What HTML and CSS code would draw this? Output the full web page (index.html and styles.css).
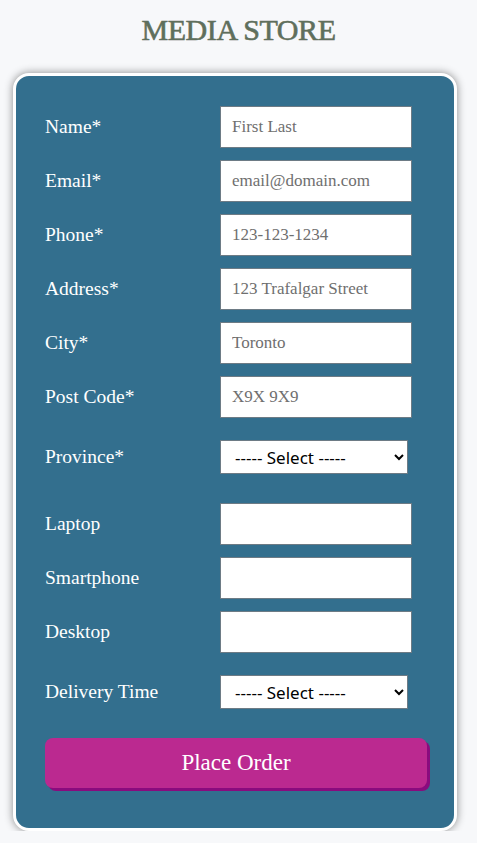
FILE: index.html
```html
<!DOCTYPE html>
<html>
<head>
<meta charset="utf-8">
<link rel="stylesheet" href="styles.css">
</head>
<body>
<h1 class="title">MEDIA STORE</h1>
<form class="card">
  <div class="row"><label class="lbl">Name*</label><input class="field" type="text" placeholder="First Last"></div>
  <div class="row"><label class="lbl">Email*</label><input class="field" type="text" placeholder="email@domain.com"></div>
  <div class="row"><label class="lbl">Phone*</label><input class="field" type="text" placeholder="123-123-1234"></div>
  <div class="row"><label class="lbl">Address*</label><input class="field" type="text" placeholder="123 Trafalgar Street"></div>
  <div class="row"><label class="lbl">City*</label><input class="field" type="text" placeholder="Toronto"></div>
  <div class="row"><label class="lbl">Post Code*</label><input class="field" type="text" placeholder="X9X 9X9"></div>
  <div class="row row-select"><label class="lbl">Province*</label><select class="pick"><option>----- Select -----</option></select></div>
  <div class="row"><label class="lbl">Laptop</label><input class="field" type="text"></div>
  <div class="row"><label class="lbl">Smartphone</label><input class="field" type="text"></div>
  <div class="row"><label class="lbl">Desktop</label><input class="field" type="text"></div>
  <div class="row row-select"><label class="lbl">Delivery Time</label><select class="pick"><option>----- Select -----</option></select></div>
  <button class="order" type="button">Place Order</button>
</form>
</body>
</html>
```
FILE: styles.css
```css
html, body {
  margin: 0;
  padding: 0;
  background: #f7f8fa;
}
body {
  font-family: "Liberation Serif", "DejaVu Serif", serif;
}
.title {
  margin: 0;
  padding-top: 13px;
  height: 73px;
  box-sizing: border-box;
  text-align: center;
  font-size: 30px;
  letter-spacing: -0.4px;
  font-weight: normal;
  -webkit-text-stroke: 0.6px #5f6f5c;
  color: #5f6f5c;
}
.card {
  box-sizing: border-box;
  width: 444px;
  margin: 0 0 0 13px;
  border: 3px solid #ffffff;
  border-radius: 16px;
  background: #336f8e;
  box-shadow: 0 0 9px rgba(0, 0, 0, 0.45);
  padding: 30px 0 40px 29px;
  display: flex;
  flex-direction: column;
  gap: 12px;
}
.row {
  display: flex;
  align-items: center;
  height: 42px;
}
.row-select {
  height: 34px;
  padding: 10px 0 17px;
}
.lbl {
  width: 175px;
  color: #ffffff;
  font-size: 19.5px;
}
.field {
  box-sizing: border-box;
  width: 192px;
  height: 42px;
  border: 1px solid #6d7b85;
  background: #ffffff;
  padding: 0 11px;
  font-family: "Liberation Serif", "DejaVu Serif", serif;
  font-size: 17px;
  color: #333;
  outline: none;
}
.field::placeholder {
  color: #6f6f6f;
}
.pick {
  box-sizing: border-box;
  width: 188px;
  height: 34px;
  border: 1px solid #6d7b85;
  border-radius: 0;
  background: #ffffff;
  padding: 0 10px;
  font-family: "Noto Sans", "Open Sans", sans-serif;
  font-size: 17px;
  color: #000;
}
.order {
  width: 382px;
  height: 50px;
  border: none;
  border-radius: 8px;
  background: #bb2990;
  box-shadow: 3px 3px 0 #8a0b7e;
  color: #ffffff;
  font-family: "Liberation Serif", "DejaVu Serif", serif;
  font-size: 23px;
  cursor: pointer;
}
```
